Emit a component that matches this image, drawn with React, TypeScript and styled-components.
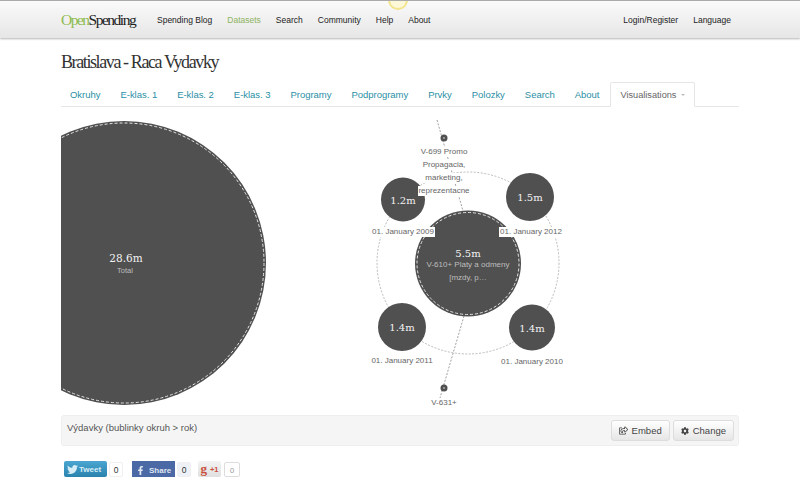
import { createGlobalStyle } from "styled-components";
import styled from "styled-components";
import { FaTwitter, FaFacebookF, FaCog, FaRegShareSquare } from "react-icons/fa";

interface BubbleData {
  x: number;
  y: number;
  r: number;
  value: string;
}

interface LabelData {
  x: number;
  y: number;
  lines: string[];
}

const mainLinks = ["Spending Blog", "Datasets", "Search", "Community", "Help", "About"];
const tabs = [
  "Okruhy",
  "E-klas. 1",
  "E-klas. 2",
  "E-klas. 3",
  "Programy",
  "Podprogramy",
  "Prvky",
  "Polozky",
  "Search",
  "About",
];

// chart coordinates are page coordinates minus the canvas origin (61, 107)
const years: BubbleData[] = [
  { x: 342, y: 92.5, r: 22, value: "1.2m" },
  { x: 469, y: 90, r: 24, value: "1.5m" },
  { x: 341, y: 220, r: 24, value: "1.4m" },
  { x: 471, y: 220.5, r: 23, value: "1.4m" },
];

const labels: LabelData[] = [
  { x: 342, y: 127, lines: ["01. January 2009"] },
  { x: 470, y: 127, lines: ["01. January 2012"] },
  { x: 341, y: 256, lines: ["01. January 2011"] },
  { x: 471, y: 257, lines: ["01. January 2010"] },
  { x: 383, y: 47, lines: ["V-699 Promo", "Propagacia,", "marketing,", "reprezentacne"] },
  { x: 383, y: 298, lines: ["V-631+"] },
];

function App() {
  return (
    <Page>
      <GlobalStyle />
      <TopBar>
        <Glow />
        <TopInner>
          <Logo>
            <LogoOpen>Open</LogoOpen>Spending
          </Logo>
          <MainNav>
            {mainLinks.map((link) => (
              <NavLink key={link} $active={link === "Datasets"}>
                {link}
              </NavLink>
            ))}
          </MainNav>
          <SideNav>
            <NavLink>Login/Register</NavLink>
            <NavLink>Language</NavLink>
          </SideNav>
        </TopInner>
      </TopBar>
      <Content>
        <Title>Bratislava - Raca Vydavky</Title>
        <TabBar>
          {tabs.map((tab) => (
            <Tab key={tab}>{tab}</Tab>
          ))}
          <ActiveTab>
            Visualisations
            <Caret />
          </ActiveTab>
        </TabBar>
        <Chart width={678} height={308} viewBox="0 0 678 308">
          <circle cx={63} cy={156} r={142} fill="#505050" />
          <circle cx={63} cy={156} r={140} fill="none" stroke="#e4e4e4" strokeWidth={1} strokeDasharray="3 2" />
          <ValueText x={65} y={155} fontSize={10.5}>
            28.6m
          </ValueText>
          <CaptionText x={64} y={166} fontSize={7.5}>
            Total
          </CaptionText>

          <circle cx={407} cy={156} r={91} fill="none" stroke="#aaa" strokeWidth={0.8} strokeDasharray="2 1.5" />
          <line x1={376} y1={13} x2={402} y2={104} stroke="#888" strokeWidth={0.8} strokeDasharray="2 1.5" />
          <line x1={403} y1={209} x2={379} y2={291} stroke="#888" strokeWidth={0.8} strokeDasharray="2 1.5" />

          <circle cx={383} cy={31} r={3.5} fill="#505050" />
          <circle cx={383} cy={31} r={1} fill="#aaa" />
          <circle cx={383} cy={281} r={3.5} fill="#505050" />
          <circle cx={383} cy={281} r={1} fill="#aaa" />

          {years.map((bubble) => (
            <g key={bubble.x}>
              <circle cx={bubble.x} cy={bubble.y} r={bubble.r} fill="#505050" />
              <ValueText x={bubble.x} y={bubble.y + 4} fontSize={10}>
                {bubble.value}
              </ValueText>
            </g>
          ))}

          <circle cx={407} cy={156.5} r={53} fill="#505050" />
          <circle cx={407} cy={156.5} r={51} fill="none" stroke="#e4e4e4" strokeWidth={1} strokeDasharray="3 2" />
          <ValueText x={407} y={150} fontSize={10}>
            5.5m
          </ValueText>
          <CaptionText x={407} y={160} fontSize={8}>
            V-610+ Platy a odmeny
          </CaptionText>
          <CaptionText x={407} y={173} fontSize={8}>
            {"[mzdy, p…"}
          </CaptionText>

          {labels.map((label) =>
            label.lines.map((line, i) => (
              <g key={line}>
                <rect
                  x={label.x - line.length * 2}
                  y={label.y + i * 13 - 7}
                  width={line.length * 4}
                  height={10}
                  fill="#fff"
                />
                <LabelText x={label.x} y={label.y + i * 13}>
                  {line}
                </LabelText>
              </g>
            ))
          )}
        </Chart>
        <InfoBar>
          <InfoText>Výdavky (bublinky okruh &gt; rok)</InfoText>
          <ButtonGroup>
            <ActionButton>
              <FaRegShareSquare size={9} />
              Embed
            </ActionButton>
            <ActionButton>
              <FaCog size={8} />
              Change
            </ActionButton>
          </ButtonGroup>
        </InfoBar>
        <ShareRow>
          <TweetButton>
            <FaTwitter size={11} />
            Tweet
          </TweetButton>
          <Count>0</Count>
          <ShareButton>
            <FaFacebookF size={9} />
            Share
          </ShareButton>
          <Count $tint>0</Count>
          <PlusButton>
            <PlusG>g</PlusG>+1
          </PlusButton>
          <Count $muted>0</Count>
        </ShareRow>
      </Content>
    </Page>
  );
}

export default App;

const GlobalStyle = createGlobalStyle`
  html, body {
    margin: 0;
    height: 100%;
    overflow: hidden;
    background: #fff;
  }
`;

const Page = styled.div`
  width: 800px;
  height: 496px;
  overflow: hidden;
  font-family: "Liberation Sans", Arial, sans-serif;
  color: #333;
`;

const TopBar = styled.header`
  position: relative;
  height: 37px;
  border-top: 1px solid #aaa;
  background: linear-gradient(#fafafa, #e6e6e6);
  box-shadow: 0 1px 2px rgba(0, 0, 0, 0.3);
  overflow: hidden;
`;

const Glow = styled.div`
  position: absolute;
  left: 388px;
  top: -11px;
  width: 16px;
  height: 16px;
  border-radius: 50%;
  border: 2px solid #f3e58e;
  background: #fdf8d8;
`;

const TopInner = styled.div`
  width: 678px;
  height: 100%;
  margin: 0 auto;
  display: flex;
  align-items: center;
`;

const Logo = styled.div`
  width: 96px;
  font-family: "Liberation Serif", serif;
  font-size: 15.5px;
  letter-spacing: -1.5px;
  color: #222;
`;

const LogoOpen = styled.span`
  color: #8dbb4e;
`;

const MainNav = styled.nav`
  display: flex;
  gap: 15px;
`;

const SideNav = styled.nav`
  display: flex;
  gap: 15px;
  margin-left: auto;
  margin-right: 8px;
`;

const NavLink = styled.a<{ $active?: boolean }>`
  font-size: 8.5px;
  color: ${(p) => (p.$active ? "#8db360" : "#222")};
`;

const Content = styled.main`
  width: 678px;
  margin: 0 auto;
`;

const Title = styled.h1`
  margin: 13px 0 0;
  height: 31px;
  font-family: "Liberation Serif", serif;
  font-size: 18px;
  line-height: 22px;
  font-weight: 400;
  letter-spacing: -1.4px;
  color: #333;
`;

const TabBar = styled.div`
  display: flex;
  align-items: flex-end;
  gap: 2px;
  height: 24px;
  border-bottom: 1px solid #e6e6e6;
`;

const Tab = styled.a`
  padding: 0 9px;
  height: 24px;
  font-size: 9.5px;
  letter-spacing: -0.03px;
  line-height: 25px;
  color: #2a8fa5;
`;

const ActiveTab = styled.a`
  display: flex;
  align-items: center;
  gap: 5px;
  box-sizing: border-box;
  padding: 0 9px;
  height: 25px;
  margin-bottom: -1px;
  font-size: 9.2px;
  color: #666;
  background: #fff;
  border: 1px solid #e6e6e6;
  border-bottom-color: #fff;
  border-radius: 2px 2px 0 0;
`;

const Caret = styled.span`
  width: 0;
  height: 0;
  margin-top: 1px;
  border: 2.5px solid transparent;
  border-top-color: #bbb;
  border-bottom-width: 0;
`;

const Chart = styled.svg`
  display: block;
`;

const ValueText = styled.text`
  font-family: "DejaVu Serif", "Liberation Serif", serif;
  fill: #f2f2f2;
  text-anchor: middle;
`;

const CaptionText = styled.text`
  font-family: "Liberation Sans", Arial, sans-serif;
  fill: #bdbdbd;
  text-anchor: middle;
`;

const LabelText = styled.text`
  font-family: "Liberation Sans", Arial, sans-serif;
  font-size: 8px;
  fill: #666;
  text-anchor: middle;
`;

const InfoBar = styled.div`
  box-sizing: border-box;
  height: 31px;
  display: flex;
  justify-content: space-between;
  padding: 4px 4px 0 5px;
  background: #f5f5f5;
  border: 1px solid #eee;
  border-radius: 3px;
`;

const InfoText = styled.div`
  font-size: 9.5px;
  line-height: 16px;
  color: #555;
`;

const ButtonGroup = styled.div`
  display: flex;
  gap: 3px;
`;

const ActionButton = styled.button`
  display: flex;
  align-items: center;
  justify-content: center;
  gap: 4px;
  height: 21px;
  padding: 0 7px;
  font-family: inherit;
  font-size: 9.5px;
  color: #444;
  background: linear-gradient(#fff, #e6e6e6);
  border: 1px solid #ddd;
  border-radius: 3px;
`;

const ShareRow = styled.div`
  display: flex;
  align-items: center;
  height: 16px;
  margin-top: 15px;
  padding-left: 3px;
`;

const TweetButton = styled.div`
  display: flex;
  align-items: center;
  gap: 1px;
  box-sizing: border-box;
  width: 43px;
  height: 16px;
  padding-left: 3px;
  font-size: 8px;
  font-weight: 700;
  color: #d6edf7;
  background: linear-gradient(#4aa5d1, #2a83ad);
  border-radius: 2px;
`;

const ShareButton = styled.div`
  display: flex;
  align-items: center;
  gap: 4px;
  box-sizing: border-box;
  width: 43px;
  height: 16px;
  margin-left: 9px;
  padding: 2px 0 0 4px;
  font-size: 8px;
  font-weight: 700;
  color: #dfe5f2;
  background: #4b69a4;
`;

const PlusButton = styled.div`
  display: flex;
  align-items: center;
  justify-content: center;
  gap: 3px;
  width: 23px;
  height: 16px;
  margin-left: 7px;
  font-size: 7.5px;
  font-weight: 700;
  color: #c9503f;
  background: linear-gradient(#f3f3f3, #e0e0e0);
  border-radius: 2px;
`;

const PlusG = styled.span`
  font-family: "Liberation Serif", serif;
  font-size: 13px;
  line-height: 12px;
`;

const Count = styled.div<{ $tint?: boolean; $muted?: boolean }>`
  box-sizing: border-box;
  width: ${(p) => (p.$muted ? "16px" : "14px")};
  height: 15px;
  margin-left: ${(p) => (p.$muted ? "3px" : "2px")};
  font-size: ${(p) => (p.$muted ? "7.5px" : "8.5px")};
  line-height: 15px;
  text-align: center;
  color: ${(p) => (p.$muted ? "#999" : "#333")};
  background: ${(p) => (p.$tint ? "#eef1f7" : "#fff")};
  border: 1px solid ${(p) => (p.$muted ? "#ddd" : "#f0f0f0")};
  border-radius: 2px;
`;
